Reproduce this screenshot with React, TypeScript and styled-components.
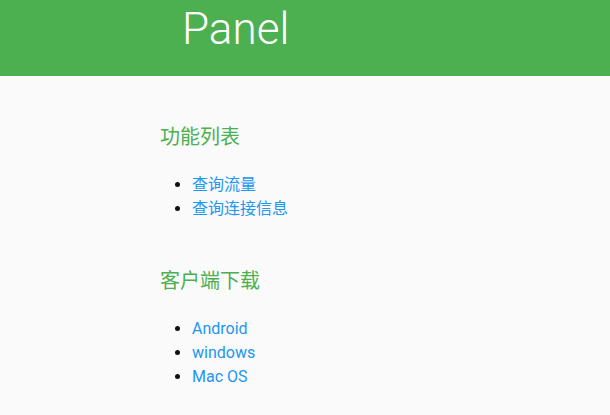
import React from "react";
import styled, { createGlobalStyle } from "styled-components";

const Global = createGlobalStyle`
  html, body { margin: 0; padding: 0; background: #fafafa; }
  body { font-family: Roboto, "Noto Sans CJK SC", sans-serif; }
`;

const Header = styled.header`
  height: 76px;
  background: #4caf50;
  padding-left: 182px;
  box-sizing: border-box;
`;

const Title = styled.h1`
  margin: 0;
  color: #fff;
  font-weight: 300;
  font-size: 44px;
  line-height: 58px;
`;

const Main = styled.main`
  padding: 47px 0 0 160px;
`;

const Section = styled.section`
  & + & { margin-top: 46px; }
`;

const Heading = styled.h2`
  margin: 0 0 22px;
  color: #4caf50;
  font-weight: 400;
  font-size: 20px;
  line-height: 28px;
`;

const List = styled.ul`
  margin: 0;
  padding-left: 32px;
  font-size: 16px;
  line-height: 24px;
  color: #111;
`;

const Item = styled.li`
  height: 24px;
`;

const Link = styled.a`
  color: #2196f3;
  text-decoration: none;
`;

export default function App() {
  return (
    <>
      <Global />
      <Header>
        <Title>Panel</Title>
      </Header>
      <Main>
        <Section>
          <Heading>功能列表</Heading>
          <List>
            <Item><Link href="#">查询流量</Link></Item>
            <Item><Link href="#">查询连接信息</Link></Item>
          </List>
        </Section>
        <Section>
          <Heading>客户端下载</Heading>
          <List>
            <Item><Link href="#">Android</Link></Item>
            <Item><Link href="#">windows</Link></Item>
            <Item><Link href="#">Mac OS</Link></Item>
          </List>
        </Section>
      </Main>
    </>
  );
}
